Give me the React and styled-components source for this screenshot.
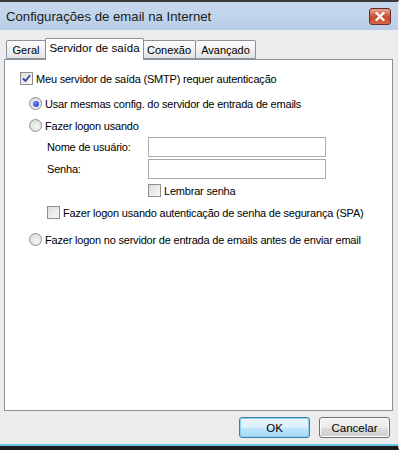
import React from "react";
import styled, { createGlobalStyle } from "styled-components";

const Global = createGlobalStyle`
  html, body { margin: 0; padding: 0; background: #ececec; }
  body { font-family: Tahoma, "Liberation Sans", Arial, sans-serif; font-size: 11px; color: #000; }
`;

const Window = styled.div`
  width: 399px;
  height: 450px;
  box-sizing: border-box;
  display: flex;
  flex-direction: column;
  background: #ececec;
  border-top: 2px solid #3a3a3a;
  border-bottom: 4px solid #1c1c1c;
  border-right: 1px solid #fafafa;
  box-shadow: inset 0 -2px 0 #6bc4e8;
`;

const TitleBar = styled.div`
  height: 28px;
  display: flex;
  align-items: center;
  justify-content: space-between;
  padding: 0 7px 0 6px;
  background: linear-gradient(#c7d9ee, #b9cee6);
`;

const Title = styled.span`
  font-size: 13.2px;
  color: #1a1a1a;
`;

const CloseButton = styled.div`
  width: 20px;
  height: 15px;
  border: 1px solid #6a2a2a;
  border-radius: 3px;
  background: linear-gradient(#e9a68f, #c9492f 55%, #d5674a);
  display: flex;
  align-items: center;
  justify-content: center;
`;

const Body = styled.div`
  flex: 1;
  display: flex;
  flex-direction: column;
  padding: 10px 5px 0 4px;
`;

const Tabs = styled.div`
  display: flex;
  align-items: flex-end;
  padding-left: 2px;
  height: 19px;
  position: relative;
  z-index: 1;
`;

const Tab = styled.div`
  box-sizing: border-box;
  width: ${p => p.$w}px;
  height: ${p => (p.$active ? "22px" : "19px")};
  padding-top: ${p => (p.$active ? "3px" : "3px")};
  margin: ${p => (p.$active ? "0 -1px -1px" : "0")};
  border: 1px solid #8a9299;
  border-bottom: ${p => (p.$active ? "none" : "1px solid #8a9299")};
  border-left: ${p => (p.$first || p.$active ? "1px solid #8a9299" : "none")};
  background: ${p => (p.$active ? "#fff" : "linear-gradient(#fdfdfd, #e4e4e4)")};
  border-radius: 2px 2px 0 0;
  position: relative;
  z-index: ${p => (p.$active ? 2 : 1)};
  font-size: ${p => (p.$active ? "11.5px" : "11px")};
  text-align: center;
  white-space: nowrap;
`;

const Panel = styled.div`
  height: 352px;
  box-sizing: border-box;
  background: #fff;
  border: 1px solid #8a9299;
  padding: 12px 15px;
  display: flex;
  flex-direction: column;
`;

const Row = styled.label`
  display: flex;
  align-items: center;
  gap: 3px;
  height: 13px;
  margin-left: ${p => p.$indent || 0}px;
  margin-top: ${p => p.$top || 0}px;
  font-size: 11px;
  letter-spacing: -0.2px;
  white-space: nowrap;
`;

const Box = styled.span`
  width: 11px;
  height: 11px;
  border: 1px solid #8f8f8f;
  background: linear-gradient(135deg, #dcdcdc, #f8f8f8);
  display: inline-flex;
  align-items: center;
  justify-content: center;
  flex: none;
`;

const Radio = styled.span`
  width: 11px;
  height: 11px;
  border-radius: 50%;
  border: 1px solid #8e8f8f;
  background: radial-gradient(circle at 60% 60%, #f7f7f7, #d4d4d4);
  display: inline-flex;
  align-items: center;
  justify-content: center;
  flex: none;
  &::after {
    content: "";
    display: ${p => (p.$on ? "block" : "none")};
    width: 6px;
    height: 6px;
    border-radius: 50%;
    background: radial-gradient(circle at 35% 35%, #6a8cff, #0a2ad0);
  }
`;

const FieldRow = styled.div`
  display: flex;
  align-items: center;
  margin-left: 27px;
  margin-top: ${p => p.$top || 0}px;
`;

const FieldLabel = styled.span`
  width: 101px;
  font-size: 11px;
  letter-spacing: -0.2px;
`;

const Input = styled.div`
  width: 176px;
  height: 18px;
  border: 1px solid #abadb3;
  border-top-color: #a3a6ad;
  background: #fff;
`;

const Footer = styled.div`
  display: flex;
  justify-content: flex-end;
  gap: 9px;
  padding: 6px 3px 0 0;
`;

const Button = styled.div`
  width: 71px;
  height: 21px;
  box-sizing: border-box;
  border: 1px solid ${p => (p.$default ? "#3c7fb1" : "#707070")};
  border-radius: 3px;
  background: ${p =>
    p.$default
      ? "linear-gradient(#eaf6fd 0%, #d9f0fc 50%, #bee6fd 51%, #a7d9f5 100%)"
      : "linear-gradient(#f2f2f2 0%, #ebebeb 50%, #dddddd 51%, #cfcfcf 100%)"};
  box-shadow: inset 0 0 0 1px ${p => (p.$default ? "#8fd0ef" : "#fbfbfb")};
  display: flex;
  align-items: center;
  justify-content: center;
  font-size: 11.5px;
`;

const Check = () => (
  <svg width="9" height="9" viewBox="0 0 9 9">
    <path d="M1 4.5 L3.5 7 L8 1.2" fill="none" stroke="#2a46a8" strokeWidth="1.8" />
  </svg>
);

const CloseX = () => (
  <svg width="10" height="9" viewBox="0 0 10 9">
    <path d="M1.5 1 L8.5 8 M8.5 1 L1.5 8" stroke="#fff" strokeWidth="2.2" strokeLinecap="square" />
  </svg>
);

export default function App() {
  return (
    <>
      <Global />
      <Window>
        <TitleBar>
          <Title>Configurações de email na Internet</Title>
          <CloseButton>
            <CloseX />
          </CloseButton>
        </TitleBar>
        <Body>
          <Tabs>
            <Tab $first $w={40}>Geral</Tab>
            <Tab $active $w={99}>Servidor de saída</Tab>
            <Tab $w={53}>Conexão</Tab>
            <Tab $w={60}>Avançado</Tab>
          </Tabs>
          <Panel>
            <Row>
              <Box>
                <Check />
              </Box>
              Meu servidor de saída (SMTP) requer autenticação
            </Row>
            <Row $indent={9} $top={12}>
              <Radio $on />
              Usar mesmas config. do servidor de entrada de emails
            </Row>
            <Row $indent={9} $top={9}>
              <Radio />
              Fazer logon usando
            </Row>
            <FieldRow $top={5}>
              <FieldLabel>Nome de usuário:</FieldLabel>
              <Input />
            </FieldRow>
            <FieldRow $top={2}>
              <FieldLabel>Senha:</FieldLabel>
              <Input />
            </FieldRow>
            <Row $indent={128} $top={5}>
              <Box />
              Lembrar senha
            </Row>
            <Row $indent={27} $top={9}>
              <Box />
              Fazer logon usando autenticação de senha de segurança (SPA)
            </Row>
            <Row $indent={9} $top={14}>
              <Radio />
              Fazer logon no servidor de entrada de emails antes de enviar email
            </Row>
          </Panel>
          <Footer>
            <Button $default>OK</Button>
            <Button>Cancelar</Button>
          </Footer>
        </Body>
      </Window>
    </>
  );
}
